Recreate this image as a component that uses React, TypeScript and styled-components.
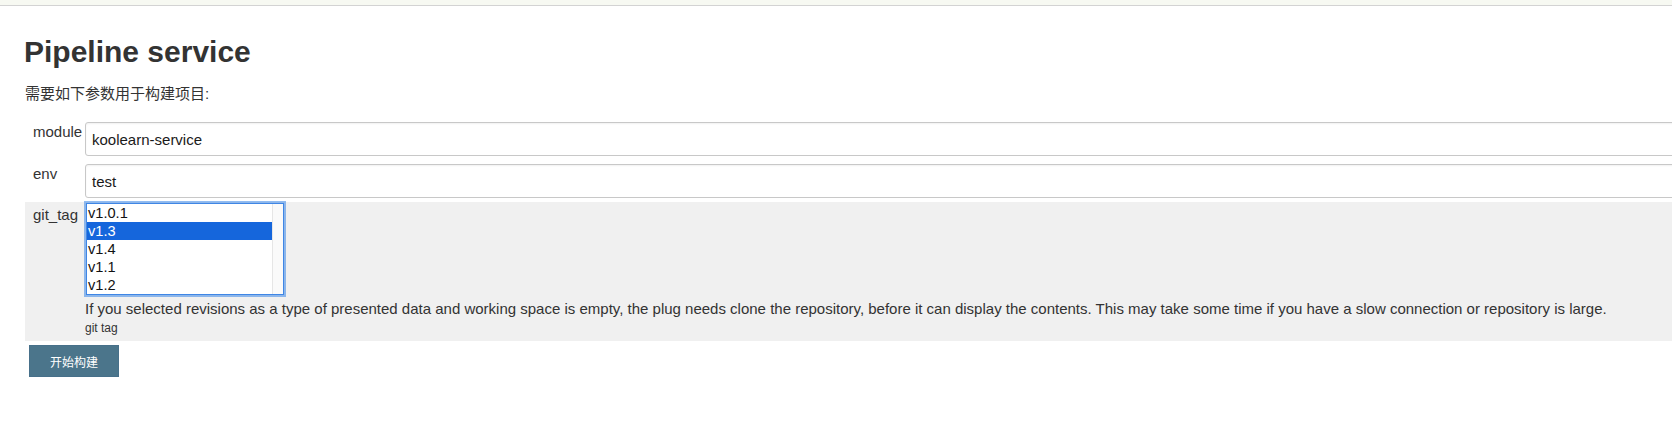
import React from 'react';
import styled, {createGlobalStyle} from 'styled-components';

const GlobalStyle = createGlobalStyle`
  html, body {
    margin: 0;
    padding: 0;
    background: #FFFFFF;
    overflow: hidden;
  }

  body {
    font-family: "Liberation Sans", Arial, "Noto Sans CJK SC", sans-serif;
    color: #333333;
  }
`;

const TopStrip = styled.div`
  height: 5px;
  background-color: #F7F9F2;
  border-bottom: 1px solid #D3D3D3;
`;

const Main = styled.main`
  padding-left: 25px;
  width: 1700px;
`;

const Title = styled.h1`
  margin: 28px 0 0 -1px;
  font-size: 30px;
  line-height: 35px;
  font-weight: 700;
  color: #333333;
`;

const Subtitle = styled.p`
  margin: 15px 0 0;
  font-size: 15px;
  line-height: 20px;
  color: #333333;
`;

const Form = styled.form`
  margin-top: 14px;
`;

const Row = styled.div<{$highlight?: boolean}>`
  display: flex;
  align-items: flex-start;
  padding: ${p => (p.$highlight ? '0 0 6px' : '4px 0')};
  background-color: ${p => (p.$highlight ? '#F0F0F0' : 'transparent')};
`;

const Label = styled.div<{$top?: number}>`
  width: 52px;
  flex-shrink: 0;
  padding: ${p => p.$top ?? 1}px 0 0 8px;
  font-size: 15px;
  line-height: 17px;
  color: #333333;
`;

const Field = styled.div`
  flex: 1;
  min-width: 0;
`;

const TextInput = styled.input`
  display: block;
  box-sizing: border-box;
  width: 100%;
  height: 34px;
  margin: 0;
  padding: 0 6px;
  border: 1px solid #C8C8C8;
  border-radius: 3px;
  box-shadow: inset 0 1px 2px rgba(0, 0, 0, 0.06);
  background-color: #FFFFFF;
  font-family: inherit;
  font-size: 15px;
  color: #1A1A1A;
  outline: none;
`;

const ListBox = styled.div`
  display: flex;
  width: 198px;
  box-sizing: border-box;
  margin: 1px 0 0 1px;
  border: 1px solid #3F86E5;
  box-shadow: 0 0 0 2px rgba(74, 143, 231, 0.6);
  background-color: #FFFFFF;
`;

const Options = styled.div`
  flex: 1;
`;

const Option = styled.div<{$selected?: boolean}>`
  height: 18px;
  padding-left: 1px;
  font-size: 14.6px;
  line-height: 18px;
  color: ${p => (p.$selected ? '#FFFFFF' : '#111111')};
  background-color: ${p => (p.$selected ? '#1566DC' : 'transparent')};
`;

const Track = styled.div`
  width: 10px;
  background-color: #FAFAFA;
  border-left: 1px solid #E6E6E6;
`;

const Description = styled.div`
  margin-top: 5px;
  font-size: 15px;
  line-height: 17px;
  color: #333333;
`;

const Hint = styled.div`
  margin-top: 4px;
  font-size: 12px;
  line-height: 14px;
  color: #333333;
`;

const BuildButton = styled.button`
  display: block;
  width: 90px;
  height: 32px;
  margin: 4px 0 0 4px;
  padding: 0;
  border: 1px solid #47708A;
  background-color: #4B758B;
  color: #FFFFFF;
  font-family: inherit;
  font-size: 12px;
  cursor: pointer;
`;

const tags = ['v1.0.1', 'v1.3', 'v1.4', 'v1.1', 'v1.2'];

export default function App() {
  return (
    <>
      <GlobalStyle/>
      <TopStrip/>
      <Main>
        <Title>Pipeline service</Title>
        <Subtitle>需要如下参数用于构建项目:</Subtitle>
        <Form onSubmit={e => e.preventDefault()}>
          <Row>
            <Label>module</Label>
            <Field>
              <TextInput defaultValue="koolearn-service"/>
            </Field>
          </Row>
          <Row>
            <Label>env</Label>
            <Field>
              <TextInput defaultValue="test"/>
            </Field>
          </Row>
          <Row $highlight>
            <Label $top={4}>git_tag</Label>
            <Field>
              <ListBox>
                <Options>
                  {tags.map(tag => (
                    <Option key={tag} $selected={tag === 'v1.3'}>{tag}</Option>
                  ))}
                </Options>
                <Track/>
              </ListBox>
              <Description>
                If you selected revisions as a type of presented data and working space is empty, the plug needs clone the repository, before it can display the contents. This may take some time if you have a slow connection or repository is large.
              </Description>
              <Hint>git tag</Hint>
            </Field>
          </Row>
          <BuildButton type="submit">开始构建</BuildButton>
        </Form>
      </Main>
    </>
  );
}
